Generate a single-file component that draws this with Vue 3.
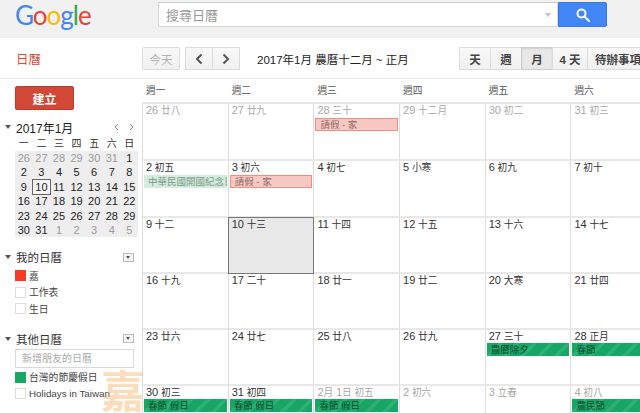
<script setup>
const weekdays = ['週一', '週二', '週三', '週四', '週五', '週六'];

const grey = true;
const rows = [
  [
    { label: '26 廿八', grey },
    { label: '27 廿九', grey },
    { label: '28 三十', grey, event: { text: '請假 - 家', type: 'leave' } },
    { label: '29 十二月', grey },
    { label: '30 初二', grey },
    { label: '31 初三', grey },
  ],
  [
    { label: '2 初五', event: { text: '中華民國開國紀念日', type: 'holiday' } },
    { label: '3 初六', event: { text: '請假 - 家', type: 'leave' } },
    { label: '4 初七' },
    { label: '5 小寒' },
    { label: '6 初九' },
    { label: '7 初十' },
  ],
  [
    { label: '9 十二' },
    { label: '10 十三', today: true },
    { label: '11 十四' },
    { label: '12 十五' },
    { label: '13 十六' },
    { label: '14 十七' },
  ],
  [
    { label: '16 十九' },
    { label: '17 二十' },
    { label: '18 廿一' },
    { label: '19 廿二' },
    { label: '20 大寒' },
    { label: '21 廿四' },
  ],
  [
    { label: '23 廿六' },
    { label: '24 廿七' },
    { label: '25 廿八' },
    { label: '26 廿九' },
    { label: '27 三十', event: { text: '農曆除夕', type: 'green' } },
    { label: '28 正月', event: { text: '春節', type: 'green' } },
  ],
  [
    { label: '30 初三', event: { text: '春節 假日', type: 'green' } },
    { label: '31 初四', event: { text: '春節 假日', type: 'green' } },
    { label: '2月 1日 初五', grey, event: { text: '春節 假日', type: 'green' } },
    { label: '2 初六', grey },
    { label: '3 立春', grey },
    { label: '4 初八', grey, event: { text: '農民節', type: 'green' } },
  ],
];

// digits run a little larger than the CJK text next to them
const labelParts = (label) => label.split(/(\d+)/).filter(Boolean);
const isNum = (part) => /^\d+$/.test(part);

const miniHead = ['一', '二', '三', '四', '五', '六', '日'];
const miniDays = [
  26, 27, 28, 29, 30, 31, 1,
  2, 3, 4, 5, 6, 7, 8,
  9, 10, 11, 12, 13, 14, 15,
  16, 17, 18, 19, 20, 21, 22,
  23, 24, 25, 26, 27, 28, 29,
  30, 31, 1, 2, 3, 4, 5,
].map((n, i) => ({ n, off: i < 6 || i > 36, today: i === 15 }));

const views = ['天', '週', '月', '4 天', '待辦事項'];
const logo = [
  ['G', '#4285f4'],
  ['o', '#ea4335'],
  ['o', '#fbbc05'],
  ['g', '#4285f4'],
  ['l', '#34a853'],
  ['e', '#ea4335'],
];
</script>

<template>
  <div class="page">
    <header class="top">
      <div class="logo">
        <span v-for="(l, i) in logo" :key="i" :style="{ color: l[1] }">{{ l[0] }}</span>
      </div>
      <div class="search">
        <span class="search-text">搜尋日曆</span>
        <span class="search-caret"></span>
      </div>
      <button class="search-btn">
        <svg width="14" height="14" viewBox="0 0 14 14" fill="none" stroke="#fff" stroke-width="2">
          <circle cx="5.5" cy="5.5" r="4" />
          <path d="M8.5 8.5L13 13" stroke-linecap="round" />
        </svg>
      </button>
    </header>

    <div class="toolbar">
      <div class="brand">日曆</div>
      <button class="btn today-btn">今天</button>
      <div class="group nav">
        <button class="btn">
          <svg width="8" height="12" viewBox="0 0 8 12" fill="none" stroke="#555" stroke-width="2"><path d="M6.5 1.5L2 6l4.5 4.5" /></svg>
        </button>
        <button class="btn">
          <svg width="8" height="12" viewBox="0 0 8 12" fill="none" stroke="#555" stroke-width="2"><path d="M1.5 1.5L6 6l-4.5 4.5" /></svg>
        </button>
      </div>
      <div class="title">2017年1月 農曆十二月 ~ 正月</div>
      <div class="group views">
        <button v-for="v in views" :key="v" class="btn" :class="{ active: v === '月' }">{{ v }}</button>
      </div>
    </div>

    <div class="body">
      <aside class="side">
        <button class="create">建立</button>

        <div class="mini-head">
          <span class="arrow"></span>
          <span class="mini-title">2017年1月</span>
          <span class="mini-nav">
            <svg width="5" height="8" viewBox="0 0 5 8" fill="none" stroke="#888"><path d="M4 1L1 4l3 3" /></svg>
            <svg width="5" height="8" viewBox="0 0 5 8" fill="none" stroke="#888"><path d="M1 1l3 3-3 3" /></svg>
          </span>
        </div>
        <div class="mini-week">
          <span v-for="d in miniHead" :key="d">{{ d }}</span>
        </div>
        <div class="mini-grid">
          <span v-for="(d, i) in miniDays" :key="i" :class="{ off: d.off, sel: d.today }">{{ d.n }}</span>
        </div>

        <div class="cal-head first">
          <span class="arrow"></span>
          <span>我的日曆</span>
          <span class="drop"></span>
        </div>
        <div class="cal-item"><i class="box red"></i>嘉</div>
        <div class="cal-item"><i class="box"></i>工作表</div>
        <div class="cal-item"><i class="box"></i>生日</div>

        <div class="cal-head second">
          <span class="arrow"></span>
          <span>其他日曆</span>
          <span class="drop"></span>
        </div>
        <div class="friend">新增朋友的日曆</div>
        <div class="cal-item"><i class="box green"></i>台灣的節慶假日</div>
        <div class="cal-item"><i class="box"></i>Holidays in Taiwan</div>
      </aside>

      <main class="month">
        <div class="week-head">
          <span v-for="w in weekdays" :key="w">{{ w }}</span>
        </div>
        <div class="grid">
          <template v-for="(row, r) in rows" :key="r">
            <div v-for="(c, i) in row" :key="i" class="cell" :class="{ today: c.today }">
              <div class="day" :class="{ grey: c.grey }">
                <span v-for="(p, k) in labelParts(c.label)" :key="k" :class="{ num: isNum(p) }">{{ p }}</span>
              </div>
              <div v-if="c.event" class="event" :class="c.event.type">{{ c.event.text }}</div>
            </div>
          </template>
        </div>
      </main>
    </div>

    <div class="watermark">嘉</div>
  </div>
</template>

<style>
html, body {
  margin: 0;
  overflow: hidden;
}
</style>

<style scoped>
.page {
  position: relative;
  width: 640px;
  height: 413px;
  overflow: hidden;
  background: #fff;
  font-family: "Liberation Sans", "Noto Sans CJK TC", sans-serif;
  font-size: 11px;
  color: #222;
}

button {
  font-family: inherit;
  margin: 0;
  padding: 0;
}

/* top bar */
.top {
  display: flex;
  align-items: flex-start;
  height: 38px;
  background: #f1f1f1;
  box-sizing: border-box;
  padding: 0 0 0 15px;
}
.logo {
  flex: none;
  width: 143px;
  font-family: Lato, sans-serif;
  font-size: 26px;
  line-height: 31px;
  letter-spacing: -1px;
}
.search {
  display: flex;
  align-items: center;
  justify-content: space-between;
  width: 400px;
  height: 25px;
  margin-top: 2px;
  box-sizing: border-box;
  padding: 0 6px 0 7px;
  background: #fff;
  border: 1px solid #d9d9d9;
  border-top-color: #ccc;
}
.search-text {
  color: #9b9b9b;
  font-size: 13px;
}
.search-caret {
  border-left: 3px solid transparent;
  border-right: 3px solid transparent;
  border-top: 4px solid #c4c4c4;
}
.search-btn {
  display: flex;
  align-items: center;
  justify-content: center;
  width: 49px;
  height: 25px;
  margin-top: 2px;
  background: #4285f4;
  border: 1px solid #3b78e7;
  border-radius: 0 2px 2px 0;
}

/* toolbar */
.toolbar {
  display: flex;
  align-items: center;
  height: 41px;
  padding-top: 1px;
  box-sizing: border-box;
  border-bottom: 1px solid #ebebeb;
  white-space: nowrap;
}
.toolbar > * {
  flex: none;
}
.brand {
  width: 142px;
  box-sizing: border-box;
  padding-left: 16px;
  color: #dd4b39;
  font-size: 12.5px;
}
.btn {
  flex: none;
  display: flex;
  align-items: center;
  justify-content: center;
  height: 23px;
  box-sizing: border-box;
  background: linear-gradient(#f8f8f8, #f1f1f1);
  border: 1px solid #dcdcdc;
  color: #444;
  font-size: 11.5px;
  font-weight: 700;
}
.today-btn {
  width: 38px;
  color: #b0b0b0;
  font-weight: 400;
  border-radius: 2px;
}
.group {
  display: flex;
}
.group .btn + .btn {
  margin-left: -1px;
}
.nav {
  margin-left: 5px;
}
.nav .btn {
  width: 28px;
}
.title {
  width: 202px;
  margin-left: 17px;
  font-size: 11.5px;
  color: #222;
}
.views .btn {
  width: 32px;
}
.views .btn:nth-child(4) {
  width: 36px;
}
.views .btn:nth-child(5) {
  width: 62px;
}
.views .btn.active {
  background: #e8e8e8;
  border-color: #ccc;
  box-shadow: inset 0 1px 2px rgba(0, 0, 0, 0.1);
}

.body {
  display: flex;
}

/* sidebar */
.side {
  flex: none;
  width: 142px;
  box-sizing: border-box;
  padding: 7px 0 0 15px;
}
.create {
  display: block;
  width: 59px;
  height: 24px;
  background: #d14836;
  border: 1px solid #c53727;
  border-radius: 2px;
  color: #fff;
  font-size: 12px;
  font-weight: 700;
}
.mini-head {
  display: flex;
  align-items: center;
  height: 18px;
  margin-top: 8px;
  font-size: 12px;
}
.arrow {
  flex: none;
  width: 0;
  margin-left: -10px;
  margin-right: 5px;
  border-left: 3px solid transparent;
  border-right: 3px solid transparent;
  border-top: 4px solid #555;
}
.mini-nav {
  display: flex;
  gap: 10px;
  margin-left: auto;
  margin-right: 8px;
}
.mini-week,
.mini-grid {
  display: grid;
  grid-template-columns: repeat(7, 17.6px);
  text-align: center;
}
.mini-week {
  height: 15px;
  line-height: 15px;
  font-size: 10px;
  color: #333;
}
.mini-grid {
  grid-auto-rows: 14.4px;
  line-height: 14.4px;
  width: 123px;
  background: #eee;
  font-size: 11px;
  color: #222;
}
.mini-grid .off {
  color: #9b9b9b;
}
.mini-grid .sel {
  outline: 1px solid #666;
  background: #f5f5f5;
}
.cal-head {
  display: flex;
  align-items: center;
  height: 16px;
  margin-bottom: 2px;
  font-size: 11.5px;
  color: #333;
  width: 119px;
}
.cal-head.first {
  margin-top: 12px;
}
.cal-head.second {
  margin-top: 14px;
}
.drop {
  position: relative;
  width: 11px;
  height: 9px;
  margin-left: auto;
  box-sizing: border-box;
  border: 1px solid #bbb;
  background: #f4f4f4;
}
.drop::after {
  content: "";
  position: absolute;
  left: 2px;
  top: 2px;
  border-left: 2.5px solid transparent;
  border-right: 2.5px solid transparent;
  border-top: 3px solid #555;
}
.cal-item {
  display: flex;
  align-items: center;
  gap: 3px;
  height: 16.5px;
  font-size: 9.8px;
  color: #444;
  white-space: nowrap;
}
.box {
  flex: none;
  width: 11px;
  height: 11px;
  box-sizing: border-box;
  border: 1px solid #ddd;
}
.box.red {
  background: #f83a22;
  border-color: #f83a22;
}
.box.green {
  background: #16a765;
  border-color: #16a765;
}
.friend {
  width: 119px;
  height: 19px;
  margin-bottom: 1px;
  line-height: 17px;
  box-sizing: border-box;
  padding-left: 6px;
  border: 1px solid #d9d9d9;
  color: #aaa;
  font-size: 10px;
}

/* month */
.month {
  flex: none;
  width: 514.2px;
}
.week-head {
  display: grid;
  grid-template-columns: repeat(6, 85.7px);
  height: 23px;
  line-height: 24px;
  color: #555;
  font-size: 9.7px;
}
.week-head span {
  padding-left: 4px;
}
.grid {
  display: grid;
  grid-template-columns: repeat(6, 85.7px);
  grid-template-rows: 57px 57px 56px 56px 56px 56px;
  border-top: 2px solid #e6e6e6;
}
.cell {
  box-sizing: border-box;
  min-width: 0;
  overflow: hidden;
  border-left: 1px solid #ddd;
  border-bottom: 2px solid #e8e8e8;
}
.cell.today {
  position: relative;
  z-index: 1;
  margin: -1px -1px 0 0;
  background: #e8e8e8;
  border: 1px solid #777;
}
.day {
  height: 13px;
  line-height: 13px;
  margin-bottom: 1px;
  padding-left: 3px;
  font-size: 9.7px;
  color: #333;
  white-space: nowrap;
}
.day .num {
  font-size: 11px;
}
.day.grey {
  color: #a8a8a8;
}
.event {
  height: 13px;
  line-height: 13px;
  margin: 0 1px;
  box-sizing: border-box;
  padding-left: 4px;
  font-size: 9.5px;
  white-space: nowrap;
  overflow: hidden;
}
.event.leave {
  line-height: 11px;
  background: #f8c9c4;
  border: 1px solid #f98a7c;
  color: #8c6b67;
}
.event.holiday {
  background: #d3ecdf;
  color: #7d9a8b;
}
.event.green {
  margin-top: -1px;
  color: #0c4a2c;
  background: repeating-linear-gradient(135deg, #16a765 0 8px, #2bb176 8px 12px);
}

/* signature over the page */
.watermark {
  position: absolute;
  left: 101px;
  top: 369px;
  font-size: 44px;
  line-height: 48px;
  font-weight: 700;
  color: rgba(247, 170, 90, 0.42);
  pointer-events: none;
}
</style>
